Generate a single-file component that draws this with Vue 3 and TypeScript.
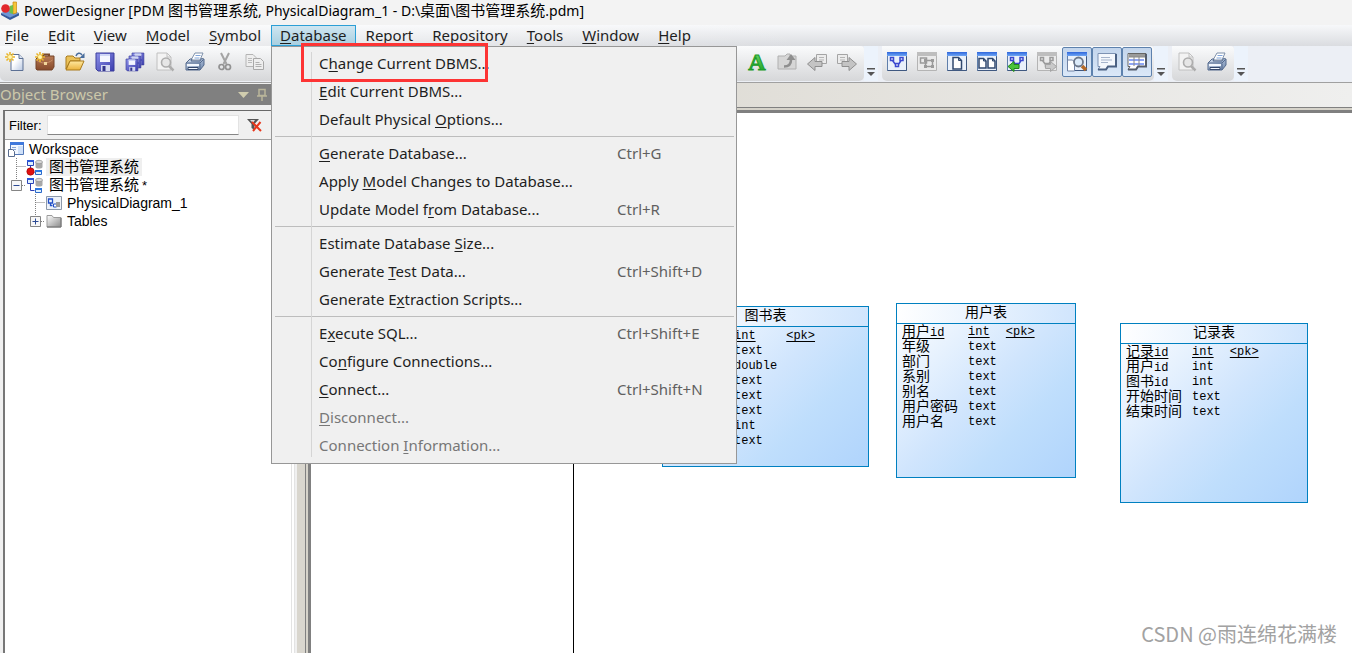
<script setup lang="ts">
interface Command {
  label: string
  shortcut?: string
  disabled?: boolean
}
interface Column {
  name?: string
  type: string
  key?: boolean
}
interface Entity {
  id: string
  title: string
  columns: Column[]
}

/* "&" marks the access key that follows it */
function split(label: string): [string, string, string] {
  const i = label.indexOf('&')
  return i < 0 ? [label, '', ''] : [label.slice(0, i), label[i + 1], label.slice(i + 2)]
}

/* separates CJK runs from Latin runs */
function runs(text: string): { text: string; cjk: boolean }[] {
  return (text.match(/[\u4e00-\u9fff]+|[^\u4e00-\u9fff]+/g) ?? []).map((t) => ({
    text: t,
    cjk: /[\u4e00-\u9fff]/.test(t),
  }))
}

const title = 'PowerDesigner [PDM 图书管理系统, PhysicalDiagram_1 - D:\\桌面\\图书管理系统.pdm]'

const menus = ['&File', '&Edit', '&View', '&Model', '&Symbol', '&Database', '&Report', '&Repository', '&Tools', '&Window', '&Help']

const commandGroups: Command[][] = [
  [{ label: 'C&hange Current DBMS...' }, { label: '&Edit Current DBMS...' }, { label: 'Default Physical &Options...' }],
  [
    { label: '&Generate Database...', shortcut: 'Ctrl+G' },
    { label: 'Apply &Model Changes to Database...' },
    { label: 'Update Model f&rom Database...', shortcut: 'Ctrl+R' },
  ],
  [
    { label: 'Estimate Database &Size...' },
    { label: 'Generate &Test Data...', shortcut: 'Ctrl+Shift+D' },
    { label: 'Generate E&xtraction Scripts...' },
  ],
  [
    { label: 'E&xecute SQL...', shortcut: 'Ctrl+Shift+E' },
    { label: 'Co&nfigure Connections...' },
    { label: '&Connect...', shortcut: 'Ctrl+Shift+N' },
    { label: '&Disconnect...', disabled: true },
    { label: 'Connection &Information...', disabled: true },
  ],
]

const entities: Entity[] = [
  {
    id: 'books',
    title: '图书表',
    columns: [
      { type: 'int', key: true },
      { type: 'text' },
      { type: 'double' },
      { type: 'text' },
      { type: 'text' },
      { type: 'text' },
      { type: 'int' },
      { type: 'text' },
    ],
  },
  {
    id: 'users',
    title: '用户表',
    columns: [
      { name: '用户id', type: 'int', key: true },
      { name: '年级', type: 'text' },
      { name: '部门', type: 'text' },
      { name: '系别', type: 'text' },
      { name: '别名', type: 'text' },
      { name: '用户密码', type: 'text' },
      { name: '用户名', type: 'text' },
    ],
  },
  {
    id: 'records',
    title: '记录表',
    columns: [
      { name: '记录id', type: 'int', key: true },
      { name: '用户id', type: 'int' },
      { name: '图书id', type: 'int' },
      { name: '开始时间', type: 'text' },
      { name: '结束时间', type: 'text' },
    ],
  },
]

const star =
  '<path d="M5 0v10M0 5h10M1.500 1.500l7 7M8.500 1.500l-7 7" stroke="#e9b62c" stroke-width="1.600"/><circle cx="5" cy="5" r="2" fill="#fff6b0"/>'
const floppy = (x: number, y: number, s: number) =>
  `<g transform="translate(${x} ${y}) scale(${s})"><path d="M0 0h18v18H2l-2-2z" fill="url(#gBlue)" stroke="#3b3d9c"/><path d="M4 1h10v8H4z" fill="#f4f6ff"/><path d="M4 1h10v2H4z" fill="#cfd6f6"/><path d="M5 12h9v6H5z" fill="#d6daf0"/><path d="M6.500 13h3v5h-3z" fill="#33358c"/></g>`
const printer =
  '<path d="M6 8l4-7h8l-3 7z" fill="#fff" stroke="#7d8fa9"/><path d="M10.500 3.500h5M9.500 6h5" stroke="#7fa3d8"/><path d="M1 11l4-4h2l-1 2h9l1.500-2.500 2.500.5v6l-4 5H1z" fill="url(#gSteel)" stroke="#53698c"/><path d="M1 11h14l3.500-3.500" fill="none" stroke="#53698c"/><path d="M2 12h12v2H2z" fill="#f3f7fd"/><path d="M3 15.500h10v2H3z" fill="#f3f7fd" stroke="#35486b"/><path d="M15 11.500v6.500" stroke="#53698c"/>'
const preview =
  '<path d="M2 1h10l4 4v13H2z" fill="#f3f3f3" stroke="#c0c0c0"/><path d="M12 1v4h4" fill="none" stroke="#c0c0c0"/><circle cx="11" cy="10.500" r="4.500" fill="#e6e6e6" stroke="#adadad" stroke-width="1.600"/><path d="M14 14l4.500 4.500" stroke="#adadad" stroke-width="2.500"/>'
const win = '<path d="M.5.5h19v18H.5z" fill="#e9f0fa" stroke="#5f7eaa"/><path d="M0 0h20v4H0z" fill="url(#gBar)"/><path d="M.5 18.500h19v-14" fill="none" stroke="#3f5880"/>'
const winGray = '<path d="M.5.5h19v18H.5z" fill="#eaeaea" stroke="#b4b4b4"/><path d="M0 0h20v4H0z" fill="#bebebe"/>'
const graph = (c: string) =>
  `<g fill="none" stroke="${c}" stroke-width="1.500"><path d="M3.500 5.500h3v3h-3zM13 5.500h3v3h-3zM8.500 11.500h3v3h-3zM5.500 8.500l3 4M14 8.500l-2.500 4"/></g>`

const icons: Record<string, string> = {
  'New': '<path d="M6 2.500h8l4 4V18.500H6z" fill="url(#gPage)" stroke="#5c7094"/><path d="M14 2.500v4h4" fill="#dbe4f3" stroke="#5c7094"/>' + star,
  'New project':
    '<path d="M8 5V2.500h6V5" fill="none" stroke="#7c4a2a" stroke-width="2"/><path d="M1 7l3-3h15v11l-2 3H2l-1-1z" fill="url(#gBrown)" stroke="#75452a"/><path d="M1.500 8c5 4 11 4 16 0" fill="none" stroke="#c98f67"/><path d="M9 10h3v3H9z" fill="#f2d49a"/>' + star,
  'Open':
    '<path d="M1 5l1-1h6l2 2h5v3H5L1 17z" fill="#eac25a" stroke="#a97b1d"/><path d="M1 18L5 9h14l-4 9z" fill="url(#gGold)" stroke="#a97b1d"/><path d="M11 4c1-3 4-4 6-1" fill="none" stroke="#496d9c" stroke-width="1.500"/><path d="M19.500 1v5h-5z" fill="#496d9c"/>',
  'Save': floppy(1, 1, 1),
  'Save all': floppy(7, 1, 0.66) + floppy(4, 4, 0.66) + floppy(1, 7, 0.66),
  'Preview': preview,
  'Print': printer,
  'Cut': '<path d="M6 1l5.500 11M14 1L8.500 12" stroke="#a4a4a4" stroke-width="2"/><circle cx="6.500" cy="15" r="2.500" fill="none" stroke="#929292" stroke-width="1.700"/><circle cx="13" cy="15" r="2.500" fill="none" stroke="#929292" stroke-width="1.700"/>',
  'Copy':
    '<path d="M1 2.500h7l3 3v9H1z" fill="#eee" stroke="#b4b4b4"/><path d="M3 6.500h4M3 8.500h4M3 10.500h4" stroke="#bbb"/><path d="M8.500 6.500h7l3 3v8h-10z" fill="#eee" stroke="#a8a8a8"/><path d="M10.500 10.500h4M10.500 12.500h6M10.500 14.500h6" stroke="#b0b0b0"/>',
  'Font':
    '<text x="10" y="18" text-anchor="middle" font-family="Liberation Serif, serif" font-weight="700" font-size="24" fill="url(#gGreen)" stroke="#1b9a28" stroke-width="1">A</text>',
  'Up': '<path d="M1 4h7l2-2h3v2h6v13H1z" fill="#d6d6d6" stroke="#b0b0b0"/><path d="M7 14.500c5 0 7-2 7-6.500" fill="none" stroke="#8f8f8f" stroke-width="2.500"/><path d="M9.500 8L14 2l4.500 6z" fill="#8f8f8f"/>',
  'Back': '<path d="M9.500 2.500h10v9h-10z" fill="#ececec" stroke="#a4a4a4"/><path d="M12 5.500h5M12 8h5" stroke="#b5b5b5"/><path d="M.5 12L8 5.500v4h7v5H8v4z" fill="#c4c4c4" stroke="#8f8f8f"/>',
  'Forward': '<path d="M.5 2.500h10v9H.5z" fill="#ececec" stroke="#a4a4a4"/><path d="M3 5.500h5M3 8h5" stroke="#b5b5b5"/><path d="M19.500 12L12 5.500v4H5v5h7v4z" fill="#c4c4c4" stroke="#8f8f8f"/>',
  'Diagram': win + graph('#3b48cf'),
  'Subdiagram': winGray + '<path d="M3.500 6h6v5h-6zM8.500 8.500h7v6h-7z" fill="none" stroke="#9a9a9a" stroke-width="1.500"/><path d="M7 7h3v3H7zM14 7h3v3h-3zM7 13h3v3H7zM14 13h3v3h-3z" fill="#9b9b9b"/>',
  'Page': win + '<path d="M6 5.500h5.500l3 3v8.500H6z" fill="#fff" stroke="#30486f" stroke-width="1.500"/><path d="M11.500 5.500v3h3" fill="none" stroke="#30486f"/>',
  'Pages': win + '<path d="M2 6.500h4.500l2.500 2.500V16H2zM11 6.500h4.500l2.500 2.500V16H11z" fill="#fff" stroke="#30486f" stroke-width="1.500"/><path d="M6.500 6.500V9H9M15.500 6.500V9H18" fill="none" stroke="#30486f"/>',
  'Previous diagram': win + graph('#3b48cf') + '<path d="M1 14.500l6-5v3h5v4H7v3z" fill="#49c33b" stroke="#22841d"/>',
  'Next diagram': winGray + graph('#9a9a9a') + '<path d="M19.500 14.500l-6-5v3h-5v4h5v3z" fill="#c9c9c9" stroke="#a4a4a4"/>',
  'Browser': win + '<path d="M.5 8h5l2 2v9h-7z" fill="#fff" stroke="#7183a5"/><path d="M15 14l4 4" stroke="#b56a28" stroke-width="3.500"/><circle cx="11.500" cy="10" r="4.500" fill="#dcebfa" stroke="#6b7689" stroke-width="1.800"/>',
  'Output': '<path d="M1 1.500h18v13H11l-2 3H1l2-3H1z" fill="#f4f7fc" stroke="#7d92b3"/><path d="M19 2v12.500H11l-2 3H1" fill="none" stroke="#4b6082" stroke-width="2"/><path d="M4 5.500h9M4 8h11M4 10.500h7" stroke="#a5b3cb"/>',
  'Result list': '<path d="M1 1.500h18v13H11l-2 3H1l2-3H1z" fill="#fff" stroke="#666"/><path d="M2 2h16v3H2z" fill="#9a9a9a"/><path d="M2 7h15v2H2zM2 11h15v2H2z" fill="#8fa6f5"/><path d="M7 5v9M12 5v9M2 5h16" stroke="#888"/><path d="M19 2v12.500H11l-2 3H1" fill="none" stroke="#555d6c" stroke-width="2"/>',
}

const mainTools = ['New', 'New project', 'Open', 'Save', 'Save all', 'Preview', 'Print', 'Cut', 'Copy']
const navTools = ['Font', 'Up', 'Back', 'Forward']
const diagramTools = ['Diagram', 'Subdiagram', 'Page', 'Pages', 'Previous diagram', 'Next diagram', 'Browser', 'Output', 'Result list']
const pressed = ['Browser', 'Output', 'Result list']
const printTools = ['Preview', 'Print']

const db =
  '<path d="M9.500 3v5c0 2 7 2 7 0V3z" fill="#a8a8a8"/><ellipse cx="13" cy="3" rx="3.500" ry="1.700" fill="#d9d9d9" stroke="#888" stroke-width=".6"/><path d="M1.500 1.500h6v5h-6z" fill="#dff0ff" stroke="#2b45b8"/><path d="M1 1h7v2H1z" fill="#2b56d8"/><path d="M4.500 7v6.500h4" fill="none" stroke="#2b3fb5"/><path d="M9.500 11.500h6v4h-6z" fill="#dff0ff" stroke="#2b69c8"/><path d="M9 11h7v2H9z" fill="#2b76e0"/>'
</script>

<template>
  <div class="app">
    <svg class="defs" aria-hidden="true">
      <defs>
        <linearGradient id="gPage" x2="1" y2="1"><stop offset=".4" stop-color="#fff" /><stop offset="1" stop-color="#b9c8e2" /></linearGradient>
        <linearGradient id="gBlue" x2="1" y2="1"><stop offset="0" stop-color="#8e92e8" /><stop offset="1" stop-color="#3a3cae" /></linearGradient>
        <linearGradient id="gBrown" x2="0" y2="1"><stop offset="0" stop-color="#b87b55" /><stop offset="1" stop-color="#86492b" /></linearGradient>
        <linearGradient id="gGold" x2="0" y2="1"><stop offset="0" stop-color="#ffe9a0" /><stop offset="1" stop-color="#eab23c" /></linearGradient>
        <linearGradient id="gSteel" x2="1" y2="1"><stop offset="0" stop-color="#d5e0f0" /><stop offset="1" stop-color="#6f88ad" /></linearGradient>
        <linearGradient id="gGreen" x2="0" y2="1"><stop offset="0" stop-color="#7be070" /><stop offset="1" stop-color="#0f9a1c" /></linearGradient>
        <linearGradient id="gBar" x2="0" y2="1"><stop offset="0" stop-color="#2f66dc" /><stop offset="1" stop-color="#6ea6f4" /></linearGradient>
      </defs>
    </svg>

    <header class="titlebar">
      <svg class="logo" viewBox="0 0 20 20" aria-hidden="true">
        <path d="M1 12l9-4 9 4-9 5z" fill="#6d97d6" />
        <path d="M1 12l9 4.500v2.500l-9-5zM10 16.500l9-4.500v2.500L10 19z" fill="#34599c" />
        <path d="M13 1h3.500v11l-3.500 1z" fill="#f5c53a" stroke="#c8860f" stroke-width=".7" />
        <path d="M9.500 5L13 4v9l-3.500-1z" fill="#6fbf4a" />
        <circle cx="5.500" cy="7.500" r="4.300" fill="#e2282c" />
      </svg>
      <h1 class="title"><span v-for="(r, i) in runs(title)" :key="i" :class="{ cjk: r.cjk }">{{ r.text }}</span></h1>
    </header>

    <nav class="menubar">
      <div v-for="m in menus" :key="m" class="menu">
        <button type="button" class="menu-button" :class="{ open: m === '&Database' }">{{ split(m)[0] }}<u>{{ split(m)[1] }}</u>{{ split(m)[2] }}</button>
        <div v-if="m === '&Database'" class="dropdown">
          <div v-for="(g, gi) in commandGroups" :key="gi" class="command-group">
            <button v-for="c in g" :key="c.label" type="button" class="command" :disabled="c.disabled">
              <span class="command-label">{{ split(c.label)[0] }}<u>{{ split(c.label)[1] }}</u>{{ split(c.label)[2] }}</span>
              <span class="shortcut">{{ c.shortcut }}</span>
            </button>
          </div>
          <div class="highlight"></div>
        </div>
      </div>
    </nav>

    <div class="toolbar">
      <div class="tools">
        <button v-for="t in mainTools" :key="t" type="button" class="tool" :aria-label="t"><svg viewBox="0 0 20 20" v-html="icons[t]" /></button>
        <span class="tool-space"></span>
        <button v-for="t in navTools" :key="t" type="button" class="tool" :aria-label="t"><svg viewBox="0 0 20 20" v-html="icons[t]" /></button>
      </div>
      <button type="button" class="more" aria-label="Toolbar options"><svg viewBox="0 0 8 8"><path d="M0 0h8v1.500H0zM0 4h8L4 8z" fill="#555" /></svg></button>
      <div class="tools">
        <button v-for="t in diagramTools" :key="t" type="button" class="tool" :class="{ pressed: pressed.includes(t) }" :aria-label="t"><svg viewBox="0 0 20 20" v-html="icons[t]" /></button>
      </div>
      <button type="button" class="more" aria-label="Toolbar options"><svg viewBox="0 0 8 8"><path d="M0 0h8v1.500H0zM0 4h8L4 8z" fill="#555" /></svg></button>
      <div class="tools">
        <button v-for="t in printTools" :key="t" type="button" class="tool" :aria-label="t"><svg viewBox="0 0 20 20" v-html="icons[t]" /></button>
      </div>
      <button type="button" class="more" aria-label="Toolbar options"><svg viewBox="0 0 8 8"><path d="M0 0h8v1.500H0zM0 4h8L4 8z" fill="#555" /></svg></button>
    </div>

    <div class="body">
      <aside class="browser">
        <div class="browser-head">
          <h2>Object Browser</h2>
          <svg viewBox="0 0 30 14" aria-hidden="true">
            <path d="M0 4h11L5.500 10z" fill="#d0ccae" />
            <path d="M21 1.500h6v6h-6zM19 8h10M24 8v5" fill="none" stroke="#b9b59a" stroke-width="1.500" />
          </svg>
        </div>
        <div class="browser-box">
          <form class="filter">
            <label for="filter">Filter:</label>
            <input id="filter" type="text" />
            <button type="button" aria-label="Clear filter">
              <svg viewBox="0 0 16 14"><path d="M0 1h12L7.500 6v6l-3-2V6z" fill="#555" /><path d="M3 2h5L6 5z" fill="#ddd" /><path d="M5 4l9 9M13.500 4L6 13" stroke="#e8371c" stroke-width="2" /></svg>
            </button>
          </form>
          <ul class="tree">
            <li class="row">
              <svg class="ws-icon" viewBox="0 0 16 16" aria-hidden="true"><path d="M2.500 1.500h13v12h-13z" fill="#f2f7ff" stroke="#5378b8" /><path d="M2 1h14v3H2z" fill="#3f78dc" /><path d="M10 5h5v8h-5z" fill="#cfe0f8" /><path d="M4 6.500h4M4 8.500h4" stroke="#8aa6d6" /><path d="M.5 8.500h4l2 2v5h-6z" fill="#fff" stroke="#5a6d8e" /></svg>
              <span class="node">Workspace</span>
            </li>
            <li class="row">
              <svg class="lines" viewBox="0 0 18 18" aria-hidden="true"><path d="M8.500 0v18M8.500 8.500h10" /></svg>
              <svg class="model-icon" viewBox="0 0 17 17" aria-hidden="true"><g v-html="db" /><circle cx="4.500" cy="12.500" r="3.700" fill="#e00f0f" stroke="#980000" stroke-width=".6" /></svg>
              <span class="node cjk selected">图书管理系统</span>
            </li>
            <li class="row">
              <svg class="lines" viewBox="0 0 18 18" aria-hidden="true"><path d="M8.500 0v4M14 9.500h4" /><path class="box" d="M3.500 4.500h10v10h-10z" /><path class="sign" d="M5.500 9.500h6" /></svg>
              <svg class="model-icon" viewBox="0 0 17 17" aria-hidden="true"><g v-html="db" /></svg>
              <span class="node cjk">图书管理系统<small>*</small></span>
            </li>
            <li class="row child">
              <svg class="lines" viewBox="0 0 18 18" aria-hidden="true"><path d="M8.500 0v18M8.500 8.500h10" /></svg>
              <svg class="diagram-icon" viewBox="0 0 16 14" aria-hidden="true"><path d="M.5.5h15v13H.5z" fill="#eef2f8" stroke="#8d99aa" /><path d="M2.500 3h4v4h-4zM6.500 9.500H4.500V7" fill="none" stroke="#2350c8" stroke-width="1.300" /><path d="M7.500 8h3v3h-3z" fill="#fff" stroke="#2350c8" /><path d="M10 6h4v5h-4z" fill="#9c9c9c" /></svg>
              <span class="node">PhysicalDiagram_1</span>
            </li>
            <li class="row child">
              <svg class="lines" viewBox="0 0 18 18" aria-hidden="true"><path d="M8.500 0v4M14 9.500h4" /><path class="box" d="M3.500 4.500h10v10h-10z" /><path class="sign" d="M5.500 9.500h6M8.500 6.500v6" /></svg>
              <svg class="diagram-icon" viewBox="0 0 16 14" aria-hidden="true"><path d="M1 1.500h5l1.500 2H15v9.500H1z" fill="url(#gFolder)" stroke="#9b9b9b" /><path d="M1 13h14V4" fill="none" stroke="#6f6f6f" /><defs><linearGradient id="gFolder" x2="1" y2="1"><stop offset="0" stop-color="#fff" /><stop offset="1" stop-color="#8a8a8a" /></linearGradient></defs></svg>
              <span class="node">Tables</span>
            </li>
          </ul>
        </div>
      </aside>
      <div class="splitter"></div>
      <main class="workspace">
        <div class="band"></div>
        <div class="frame">
          <div class="canvas">
            <div class="page-edge"></div>
            <section v-for="e in entities" :key="e.id" class="entity" :class="e.id">
              <h3>{{ e.title }}</h3>
              <table>
                <tbody>
                  <tr v-for="(c, i) in e.columns" :key="i">
                    <td class="name"><span :class="{ key: c.key }"><span v-for="(r, k) in runs(c.name ?? '')" :key="k" :class="{ latin: !r.cjk }">{{ r.text }}</span></span></td>
                    <td><span :class="{ key: c.key }">{{ c.type }}</span></td>
                    <td><span v-if="c.key" class="key">&lt;pk&gt;</span></td>
                  </tr>
                </tbody>
              </table>
            </section>
            <p class="watermark">CSDN @雨连绵花满楼</p>
          </div>
        </div>
      </main>
    </div>
  </div>
</template>

<style>
body {
  margin: 0;
  overflow: hidden;
}
</style>

<style scoped>
* {
  box-sizing: border-box;
}
.app {
  display: flex;
  flex-direction: column;
  height: 100vh;
  background: #fff;
  color: #1e1e1e;
  font-family: "Noto Sans", "Noto Sans CJK SC", sans-serif;
  font-size: 15px;
}
button {
  border: 0;
  margin: 0;
  padding: 0;
  background: none;
  color: inherit;
  font: inherit;
}
svg {
  display: block;
  flex: none;
}
h1,
h2,
h3,
p,
ul {
  margin: 0;
  padding: 0;
  font-weight: 400;
  list-style: none;
}
.defs {
  position: absolute;
  width: 0;
  height: 0;
}
.titlebar {
  display: flex;
  align-items: center;
  gap: 4px;
  flex: none;
  height: 25px;
  padding-bottom: 4px;
  background: #f3f3f3;
}
.logo {
  width: 20px;
  height: 20px;
}
.title {
  color: #000;
  font-size: 14px;
  line-height: 20px;
  white-space: nowrap;
}
.title .cjk {
  font-size: 15px;
}
.menubar {
  display: flex;
  flex: none;
  gap: 1px;
  height: 21px;
  background: linear-gradient(90deg, rgba(255, 255, 255, 0.6), rgba(255, 255, 255, 0) 60%), linear-gradient(#f7f8fa, #dadce0);
}
.menu {
  position: relative;
}
.menu-button {
  height: 21px;
  padding: 0 8px;
  border: 1px solid transparent;
  line-height: 19px;
  white-space: nowrap;
}
.menu:first-child .menu-button {
  padding-left: 4px;
}
.menu-button.open {
  border-color: #2c9fd6;
  background: linear-gradient(#cfe6f1, #a9cfe0);
}
u {
  text-underline-offset: 2px;
  text-decoration-thickness: 1px;
}
.dropdown {
  position: absolute;
  z-index: 5;
  top: 21px;
  left: 0;
  width: 466px;
  padding: 2px 2px 4px 3px;
  border: 1px solid #979797;
  background: #f0f0f0;
}
.dropdown::before {
  content: "";
  position: absolute;
  top: 5px;
  bottom: 6px;
  left: 39px;
  width: 1px;
  background: #d5d5d5;
}
.command-group + .command-group {
  margin-top: 3px;
  padding-top: 2px;
  border-top: 1px solid #bdbdbd;
}
.command {
  display: grid;
  grid-template-columns: 298px 1fr;
  width: 100%;
  height: 28px;
  padding-left: 44px;
  line-height: 28px;
  text-align: left;
  white-space: nowrap;
}
.shortcut {
  color: #606060;
}
.command:disabled {
  color: #777;
}
.highlight {
  position: absolute;
  top: -4px;
  left: 29px;
  width: 187px;
  height: 39px;
  border: 3px solid #fd3434;
}
.toolbar {
  display: flex;
  flex: none;
  height: 36px;
  background: #eceff5;
}
.tools {
  display: flex;
  height: 35px;
  padding-right: 2px;
  border-radius: 0 4px 5px 5px;
  background: linear-gradient(#fafbfc, #d6d7d9);
}
.tool-space {
  width: 472px;
}
.tool {
  display: grid;
  place-items: center;
  width: 30px;
  height: 30px;
  margin-top: 1px;
}
.tool svg {
  width: 20px;
  height: 20px;
  overflow: visible;
}
.tool.pressed {
  border: 1px solid #5d81ad;
  border-radius: 2px;
  background: linear-gradient(#c3d5ec, #dbe8f8);
}
.more {
  display: flex;
  align-items: flex-end;
  justify-content: center;
  width: 14px;
  height: 35px;
  margin-right: 4px;
  padding-bottom: 5px;
  background: #ecf3fc;
}
.more svg {
  width: 8px;
  height: 8px;
}
.body {
  display: flex;
  flex: 1;
  min-height: 0;
  border-top: 1px solid #a0a0a0;
}
.browser {
  display: flex;
  flex-direction: column;
  flex: none;
  width: 297px;
  padding-top: 1px;
  background: #f0f0f0;
}
.browser-head {
  display: flex;
  align-items: center;
  justify-content: space-between;
  height: 21px;
  margin-right: 26px;
  background: #808080;
  color: #ccc8aa;
}
.browser-head h2 {
  font-size: 15px;
  line-height: 21px;
}
.browser-head svg {
  width: 30px;
  height: 14px;
  margin-right: 3px;
}
.browser-box {
  flex: 1;
  margin: 5px 2px 0 3px;
  border-top: 1px solid #696969;
  border-right: 1px solid #e3e3e3;
  border-left: 2px solid #777;
  background: #fff;
  box-shadow: inset -2px 0 #fff, inset -3px 0 #e3e3e3;
  color: #000;
  font-family: "Liberation Sans", "Noto Sans CJK SC", sans-serif;
}
.filter {
  display: flex;
  align-items: center;
  height: 29px;
  padding-left: 4px;
  border-bottom: 1px solid #a0a0a0;
  background: #f0f0f0;
  font-size: 13px;
}
.filter input {
  width: 192px;
  height: 20px;
  margin: 0 8px 0 5px;
  border: 1px solid #e3e3e3;
  border-bottom-color: #868686;
  background: #fff;
  font: inherit;
}
.filter svg {
  width: 16px;
  height: 14px;
}
.tree {
  font-size: 14px;
}
.row {
  display: flex;
  align-items: center;
  height: 18px;
  padding-left: 3px;
  white-space: nowrap;
}
.row.child {
  padding-left: 22px;
}
.row:first-child {
  gap: 5px;
}
.ws-icon {
  width: 16px;
  height: 16px;
}
.lines {
  width: 18px;
  height: 18px;
  fill: none;
  stroke: #808080;
  stroke-dasharray: 1 1;
}
.lines .box {
  fill: #f7f7f7;
  stroke: #858585;
  stroke-dasharray: none;
}
.lines .sign {
  stroke: #2c4a94;
  stroke-dasharray: none;
}
.model-icon {
  width: 17px;
  height: 17px;
}
.diagram-icon {
  width: 16px;
  height: 14px;
  margin: 0 5px 0 1px;
}
.node.cjk {
  margin-left: 3px;
  padding: 0 3px;
  font-size: 15px;
  line-height: 18px;
}
.node.selected {
  background: #efefef;
}
.node small {
  margin-left: 3px;
  font-size: 13px;
}
.splitter {
  flex: none;
  width: 8px;
  background: #d9d6ce;
}
.workspace {
  display: flex;
  flex: 1;
  flex-direction: column;
  min-width: 0;
}
.band {
  flex: none;
  height: 24px;
  background: linear-gradient(90deg, #d6d2c8, #efefee);
}
.frame {
  display: flex;
  flex: 1;
  padding: 2px 0 0 2px;
  border: solid #808080;
  border-width: 1px 0 0 1px;
  background: #d6d3ca;
}
.canvas {
  position: relative;
  flex: 1;
  border: solid #808080;
  border-width: 3px 0 0 3px;
  background: #fff;
  overflow: hidden;
}
.page-edge {
  position: absolute;
  top: 0;
  bottom: 0;
  left: 262px;
  border-left: 1px solid #000;
}
.entity {
  position: absolute;
  border: 1px solid #0080c0;
  background: linear-gradient(135deg, #fff, #d0e5fd 50%, #bfdefc 70%, #b0d4fc);
  color: #000;
}
.books {
  top: 193px;
  left: 351px;
  width: 207px;
  height: 161px;
}
.users {
  top: 190px;
  left: 585px;
  width: 180px;
  height: 175px;
}
.records {
  top: 210px;
  left: 809px;
  width: 188px;
  height: 180px;
}
.entity h3 {
  height: 20px;
  border-bottom: 1px solid #0080c0;
  background: linear-gradient(100deg, #fff, #d0e5fd);
  font-family: "Noto Sans CJK SC", sans-serif;
  font-size: 14px;
  line-height: 14px;
  text-align: center;
}
.entity table {
  margin: 1px 0 0 5px;
  border-collapse: collapse;
  font-family: "Liberation Mono", "Noto Sans CJK SC", monospace;
  font-size: 12px;
}
.entity td {
  height: 15px;
  padding: 0 9px 0 0;
  line-height: 15px;
  vertical-align: top;
  white-space: nowrap;
}
.entity td.name {
  min-width: 66px;
  font-size: 14px;
}
.entity .latin {
  font-size: 12px;
  line-height: 1px;
}
.key {
  text-decoration: underline;
  text-decoration-thickness: 1px;
  text-underline-offset: 2px;
}
.books table {
  margin-top: 2px;
}
.watermark {
  position: absolute;
  right: 15px;
  bottom: 5px;
  color: #a2a2a2;
  font-family: "Noto Sans CJK SC", sans-serif;
  font-size: 20px;
  line-height: 28px;
}
</style>
